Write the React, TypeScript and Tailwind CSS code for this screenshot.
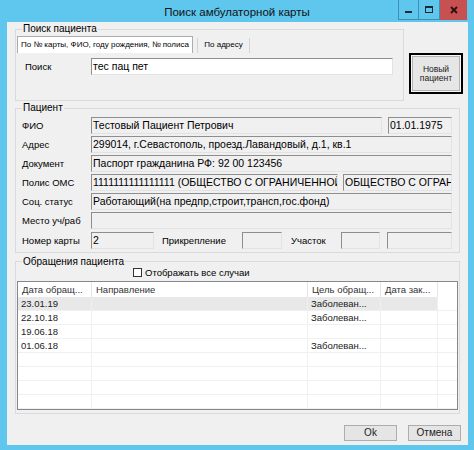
import React from "react";

function Box({
  className,
  children,
  white,
}: {
  className: string;
  children?: React.ReactNode;
  white?: boolean;
}) {
  return (
    <div
      className={`${className} h-[17px] shrink-0 border border-t-[#8e8e8e] border-l-[#8e8e8e] border-r-[#e3e3e3] border-b-[#e3e3e3] ${
        white ? "bg-white" : "bg-[#f0f0f0]"
      } pl-[1px] text-[10.5px] leading-[15px] text-black whitespace-nowrap overflow-hidden`}
    >
      {children}
    </div>
  );
}

function Label({ children }: { children: React.ReactNode }) {
  return <div className="w-[69px] shrink-0 text-[9.5px] leading-[12px] text-black whitespace-nowrap">{children}</div>;
}

const rows: string[][] = [
  ["23.01.19", "", "Заболеван...", ""],
  ["22.10.18", "", "Заболеван...", ""],
  ["19.06.18", "", "", ""],
  ["01.06.18", "", "Заболеван...", ""],
  ["", "", "", ""],
  ["", "", "", ""],
  ["", "", "", ""],
  ["", "", "", ""],
];

export default function App() {
  return (
    <div className="w-[474px] h-[450px] bg-[#5fc7ee] flex flex-col font-['Liberation_Sans',Arial,sans-serif] text-black overflow-hidden">
      {/* Title bar */}
      <div className="h-[22px] shrink-0 grid grid-cols-[1fr_auto_1fr]">
        <div />
        <div className="text-[11.5px] leading-[24px] text-[#111] whitespace-nowrap">Поиск амбулаторной карты</div>
        <div className="flex justify-end items-start pr-[7px]">
          <div className="w-[21px] h-[20px] border-x border-b border-[#3c8fb7] flex items-end justify-center pb-[6px]">
            <div className="w-[7px] h-[2px] bg-[#1c2b33]" />
          </div>
          <div className="w-[21px] h-[20px] border-r border-b border-[#3c8fb7] flex items-center justify-center">
            <div className="w-[8px] h-[7px] border border-t-[2px] border-[#1c2b33]" />
          </div>
          <div className="w-[27px] h-[20px] bg-[#c75050] flex items-center justify-center">
            <svg width="8" height="8" viewBox="0 0 8 8">
              <path d="M1 1 L7 7 M7 1 L1 7" stroke="#2a0f0f" strokeWidth="1.8" />
            </svg>
          </div>
        </div>
      </div>

      {/* Client area */}
      <div className="ml-[7px] mr-[6px] h-[423px] shrink-0 bg-[#f0f0f0] flex flex-col">
        {/* Search block */}
        <div className="flex mt-[1px]">
          <fieldset className="ml-[8px] w-[389px] h-[78px] border border-[#dadada] pl-[1px] pt-[1px]">
            <legend className="ml-[5px] px-[1px] text-[10px] leading-[12px]">Поиск пациента</legend>
            <div className="flex items-end h-[17px]">
              <div className="w-[176px] h-[17px] bg-white border-x border-t border-[#acacac] text-[8px] leading-[16px] text-center whitespace-nowrap">
                По № карты, ФИО, году рождения, № полиса
              </div>
              <div className="ml-[4px] w-[53px] h-[15px] border-x border-[#d4d4d4] text-[8px] leading-[14px] text-center whitespace-nowrap">
                По адресу
              </div>
            </div>
            <div className="flex items-center mt-[5px] ml-[8px]">
              <div className="w-[66px] text-[9.5px] leading-[12px]">Поиск</div>
              <Box className="w-[302px]" white>
                тес пац пет
              </Box>
            </div>
          </fieldset>
          <div className="ml-[5px] mt-[30px] w-[54px] h-[41px] border-[2px] border-black p-[1px] bg-[#f7f7f7]">
            <div className="w-full h-full border border-[#b4b4b4] bg-[#e6e6e6] flex flex-col items-center justify-center text-[8.5px] leading-[9px] text-[#222]">
              <span>Новый</span>
              <span>пациент</span>
            </div>
          </div>
        </div>

        {/* Patient block */}
        <fieldset className="mt-[1px] ml-[8px] w-[445px] border border-[#dadada] pl-[6px] pr-[7px] pt-[3px] pb-[3px]">
          <legend className="ml-[0px] px-[1px] text-[10px] leading-[12px]">Пациент</legend>
          <div className="flex flex-col gap-[2px]">
            <div className="flex items-center">
              <Label>ФИО</Label>
              <Box className="w-[291px]">Тестовый Пациент Петрович</Box>
              <Box className="ml-[6px] w-[64px]">01.01.1975</Box>
            </div>
            <div className="flex items-center">
              <Label>Адрес</Label>
              <Box className="w-[361px]">299014, г.Севастополь, проезд.Лавандовый, д.1, кв.1</Box>
            </div>
            <div className="flex items-center">
              <Label>Документ</Label>
              <Box className="w-[361px]">Паспорт гражданина РФ: 92 00 123456</Box>
            </div>
            <div className="flex items-center">
              <Label>Полис ОМС</Label>
              <Box className="w-[247px]">1111111111111111 (ОБЩЕСТВО С ОГРАНИЧЕННОЙ</Box>
              <Box className="ml-[5px] w-[109px]">ОБЩЕСТВО С ОГРАНИ</Box>
            </div>
            <div className="flex items-center">
              <Label>Соц. статус</Label>
              <Box className="w-[361px]">Работающий(на предпр,строит,трансп,гос.фонд)</Box>
            </div>
            <div className="flex items-center">
              <Label>Место уч/раб</Label>
              <Box className="w-[361px]" />
            </div>
            <div className="flex items-center mt-[1px]">
              <Label>Номер карты</Label>
              <Box className="w-[63px]">2</Box>
              <div className="ml-[8px] w-[80px] text-[9.5px] leading-[12px]">Прикрепление</div>
              <Box className="w-[40px]" />
              <div className="ml-[9px] w-[50px] text-[9.5px] leading-[12px]">Участок</div>
              <Box className="w-[39px]" />
              <Box className="ml-[7px] w-[65px]" />
            </div>
          </div>
        </fieldset>

        {/* Visits block */}
        <fieldset className="mt-[3px] ml-[8px] w-[445px] border border-[#dadada] pl-[1px] pb-[3px]">
          <legend className="ml-[5px] px-[1px] text-[10px] leading-[11px]">Обращения пациента</legend>
          <div className="h-[14px] flex items-start ml-[116px]">
            <div className="mt-[1px] w-[9px] h-[9px] border border-[#333] bg-white" />
            <div className="ml-[3px] text-[9.5px] leading-[12px]">Отображать все случаи</div>
          </div>
          <div className="w-[441px] h-[129px] border border-[#828790] bg-white overflow-hidden">
            <div className="grid grid-cols-[74px_216px_73px_57px_19px] h-[15px] text-[9.5px] leading-[15px] text-[#333]">
              <div className="pl-[4px] border-r border-[#e5e5e5] whitespace-nowrap overflow-hidden">Дата обращ...</div>
              <div className="pl-[4px] border-r border-[#e5e5e5] whitespace-nowrap overflow-hidden">Направление</div>
              <div className="pl-[4px] border-r border-[#e5e5e5] whitespace-nowrap overflow-hidden">Цель обращ...</div>
              <div className="pl-[4px] border-r border-[#e5e5e5] whitespace-nowrap overflow-hidden">Дата зак...</div>
              <div />
            </div>
            {rows.map((r, i) => (
              <div key={i} className="grid grid-cols-[74px_216px_73px_57px_19px] h-[14px] text-[9.5px] leading-[13px] text-[#222]">
                {r.map((c, j) => (
                  <div
                    key={j}
                    className={`pl-[3px] border-r border-b border-[#f0f0f0] whitespace-nowrap overflow-hidden ${
                      i === 0 ? "bg-[#e8e8e8]" : ""
                    }`}
                  >
                    {c}
                  </div>
                ))}
                <div className="border-b border-[#f0f0f0]" />
              </div>
            ))}
          </div>
        </fieldset>

        {/* Buttons */}
        <div className="flex justify-end mt-[11px] mr-[7px] gap-[11px]">
          <div className="w-[53px] h-[16px] border border-[#adadad] bg-[#e5e5e5] text-[10px] leading-[14px] text-center text-[#222]">
            Ok
          </div>
          <div className="w-[53px] h-[16px] border border-[#adadad] bg-[#e5e5e5] text-[10px] leading-[14px] text-center text-[#222]">
            Отмена
          </div>
        </div>
      </div>
    </div>
  );
}
